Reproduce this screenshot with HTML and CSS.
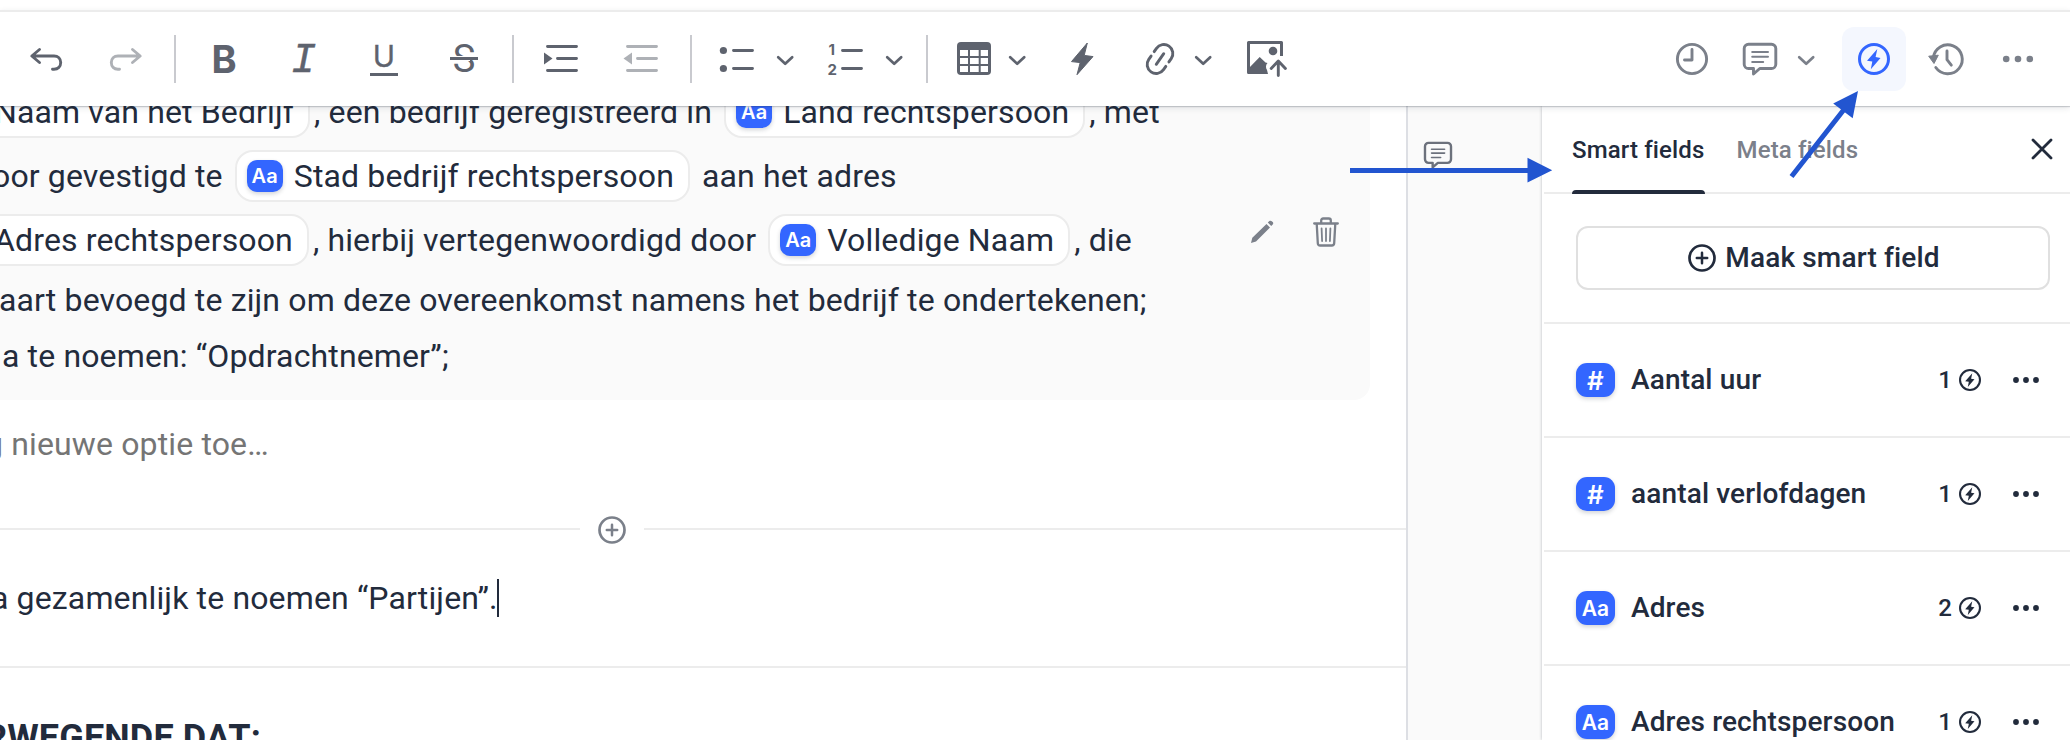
FILE: index.html
```html
<!DOCTYPE html>
<html lang="nl">

<head>
    <meta charset="UTF-8">
    <meta name="viewport" content="width=device-width, initial-scale=1.0">
    <title>Document editor - Smart fields</title>
    <link rel="stylesheet" href="styles.css">
</head>

<body>
    <!-- Shared icons -->
    <svg class="sprite">
        <symbol id="chevron" viewBox="0 0 26 64">
            <path d="M6.2 30.2l7 6.6 7-6.6" fill="none" stroke="currentColor" stroke-width="2.7" stroke-linecap="round" stroke-linejoin="round" />
        </symbol>
        <symbol id="comment" viewBox="0 0 36 34">
            <path d="M6.5 2.3h23a4.3 4.3 0 0 1 4.3 4.3v15.6a4.3 4.3 0 0 1-4.3 4.3H17.8L11.5 32v-5.5h-5a4.3 4.3 0 0 1-4.3-4.3V6.6a4.3 4.3 0 0 1 4.3-4.3z" fill="none" stroke="currentColor" stroke-width="2.9" stroke-linejoin="round" />
            <path d="M10.2 10h15.8M10.2 14.7h15.8M10.2 20h11" stroke="currentColor" stroke-width="2" stroke-linecap="round" />
        </symbol>
        <symbol id="smart" viewBox="0 0 32 32">
            <circle cx="16" cy="16" r="14.5" fill="none" stroke="currentColor" stroke-width="3" />
            <path d="M19.3 6L9 17.8l5.3.8L12.8 26.3 22.5 14.9l-4.9-.9z" fill="currentColor" />
        </symbol>
        <symbol id="plus" viewBox="0 0 28 28">
            <circle cx="14" cy="14" r="12.5" fill="none" stroke="currentColor" stroke-width="2.7" />
            <path d="M14 8.8v10.4M8.8 14h10.4" stroke="currentColor" stroke-width="2.5" stroke-linecap="round" />
        </symbol>
        <symbol id="dots" viewBox="0 0 26 6">
            <circle cx="3" cy="3" r="2.9" fill="currentColor" />
            <circle cx="13" cy="3" r="2.9" fill="currentColor" />
            <circle cx="23" cy="3" r="2.9" fill="currentColor" />
        </symbol>
    </svg>

    <!-- Toolbar -->
    <div class="toolbar">
        <div class="tools">
            <button class="tool">
                <svg viewBox="0 0 64 64"><path class="line" d="M25.5 22.5L17.8 29l7.7 6.5M18 29h22c4 0 6.7 2.7 6.7 6.6S44 42.2 40 42.2h-1.5" /></svg>
            </button>
            <button class="tool disabled">
                <svg viewBox="0 0 64 64"><path class="line" d="M38.5 22.5l7.7 6.5-7.7 6.5M46 29H24c-4 0-6.7 2.7-6.7 6.6s2.7 6.6 6.7 6.6h1.5" /></svg>
            </button>
            <span class="separator"></span>
            <button class="tool bold">B</button>
            <button class="tool italic">I</button>
            <button class="tool underline"><span>U</span></button>
            <button class="tool strike">
                <span>S</span>
                <svg viewBox="0 0 64 64"><path d="M18 29h20v5H18z" fill="#fff" /><path d="M18 31.5h28" stroke="currentColor" stroke-width="3" /></svg>
            </button>
            <span class="separator"></span>
            <button class="tool">
                <svg viewBox="0 0 64 64"><path class="line" d="M17.5 19.5h29M27.5 31.5h19M17.5 43.5h29" /><path d="M14 25.5l8.5 6-8.5 6z" fill="currentColor" /></svg>
            </button>
            <button class="tool disabled">
                <svg viewBox="0 0 64 64"><path class="line" d="M17.5 19.5h29M27.5 31.5h19M17.5 43.5h29" /><path d="M22 25.5l-8.5 6 8.5 6z" fill="currentColor" /></svg>
            </button>
            <span class="separator"></span>
            <button class="tool dropdown">
                <svg viewBox="0 0 64 64">
                    <circle cx="15.4" cy="23.5" r="3.6" fill="currentColor" /><circle cx="15.4" cy="41.5" r="3.6" fill="currentColor" />
                    <path class="line" d="M25.5 23.5h19M25.5 41.5h19" />
                </svg>
                <svg class="chevron"><use href="#chevron" /></svg>
            </button>
            <button class="tool dropdown">
                <svg viewBox="0 0 64 64">
                    <text class="digit" x="11.5" y="28">1</text><text class="digit" x="10.5" y="48">2</text>
                    <path class="line" d="M25.5 23.5h19M25.5 41.5h19" />
                </svg>
                <svg class="chevron"><use href="#chevron" /></svg>
            </button>
            <span class="separator"></span>
            <button class="tool dropdown narrow">
                <svg viewBox="0 0 60 64">
                    <rect x="13" y="15" width="34" height="33" rx="4" fill="currentColor" />
                    <path d="M16 23h8v6h-8zM26 23h8.7v6H26zM36.7 23H44v6h-7.3zM16 31h8v6h-8zM26 31h8.7v6H26zM36.7 31H44v6h-7.3zM16 39h8v6h-8zM26 39h8.7v6H26zM36.7 39H44v6h-7.3z" fill="#fff" />
                </svg>
                <svg class="chevron"><use href="#chevron" /></svg>
            </button>
            <button class="tool">
                <svg viewBox="0 0 64 64"><path d="M37.3 16L21.5 34.6l8.7 1L27 47.7l16-18.1-8.8-1.2z" fill="currentColor" stroke="currentColor" stroke-linejoin="round" /></svg>
            </button>
            <button class="tool dropdown narrow">
                <svg viewBox="0 0 60 64">
                    <path class="line" transform="translate(30 32) rotate(35)" d="M-9-2.7v-4a9 9 0 0 1 18 0v4M-9 2.7v4a9 9 0 0 0 18 0v-4M0-6.500v13" />
                </svg>
                <svg class="chevron"><use href="#chevron" /></svg>
            </button>
            <button class="tool">
                <svg viewBox="0 0 64 64">
                    <path d="M45.5 29V15.5h-33v30H30" fill="none" stroke="currentColor" stroke-width="3" stroke-linejoin="round" />
                    <path d="M12.5 41.5L23.7 30l5.8 5.5 2 .5c-1.8 1.5-2 5-.5 7l1 4H12.5z" fill="currentColor" />
                    <circle cx="37" cy="24" r="4.3" fill="currentColor" />
                    <path class="line" d="M42.3 48.5V34.5M35.2 41.5l7.1-7.5 7.1 7.5" />
                </svg>
            </button>
        </div>

        <div class="tools panel-tools">
            <button class="tool">
                <svg viewBox="0 0 64 64"><circle class="line" cx="32" cy="32" r="14.6" /><path class="line" d="M32 22.5V33h-7.5" /></svg>
            </button>
            <button class="tool dropdown comments">
                <svg class="comment-icon"><use href="#comment" /></svg>
                <svg class="chevron"><use href="#chevron" /></svg>
            </button>
            <button class="tool active">
                <svg class="smart-icon"><use href="#smart" /></svg>
            </button>
            <button class="tool">
                <svg viewBox="0 0 64 64">
                    <path class="line" d="M19.3 31a14.5 14.5 0 1 1 2.5 9.5" />
                    <path d="M14.7 29.2l9.6-1-4.3 8.3z" fill="currentColor" stroke="currentColor" stroke-linejoin="round" />
                    <path class="line" d="M33 24v8.7l4.3 5.5" />
                </svg>
            </button>
            <button class="tool">
                <svg viewBox="0 0 64 64"><circle cx="20.2" cy="32" r="3.3" fill="currentColor" /><circle cx="32" cy="32" r="3.3" fill="currentColor" /><circle cx="43.8" cy="32" r="3.3" fill="currentColor" /></svg>
            </button>
        </div>
    </div>

    <div class="workspace">
        <!-- Document -->
        <div class="document">
            <div class="option">
                <div class="option-text">
                    <div class="row first"><span class="chip">Naam van het Bedrijf</span><span>, een bedrijf geregistreerd in </span><span class="chip"><i class="badge">Aa</i>Land rechtspersoon</span><span>, met</span></div>
                    <div class="row second"><span>oor gevestigd te </span><span class="chip"><i class="badge">Aa</i>Stad bedrijf rechtspersoon</span><span> aan het adres</span></div>
                    <div class="row third"><span class="chip">Adres rechtspersoon</span><span>, hierbij vertegenwoordigd door </span><span class="chip"><i class="badge">Aa</i>Volledige Naam</span><span>, die</span></div>
                    <p class="fourth">aart bevoegd te zijn om deze overeenkomst namens het bedrijf te ondertekenen;</p>
                    <p class="fifth">a te noemen: “Opdrachtnemer”;</p>
                </div>
                <div class="option-actions">
                    <svg width="24" height="24" viewBox="0 0 24 24">
                        <path d="M1 23l1.3-5.3L16.5 3.9 20 7.4 6 21.5zM17.8 2.600l1.6-1.5c.7-.6 1.700-.5 2.400.1l.9.900c.7.700.7 1.700 0 2.400l-1.500 1.500z" fill="currentColor" />
                    </svg>
                    <svg width="26" height="30" viewBox="0 0 26 30">
                        <path d="M1.2 6.5h23.6M8.2 6V3.500c0-1.200.8-2 2-2h5.600c1.200 0 2 .8 2 2V6M3.700 6.500l1.100 19.700c.1 1.500 1 2.300 2.400 2.300h11.600c1.400 0 2.300-.8 2.400-2.300l1.100-19.700" fill="none" stroke="currentColor" stroke-width="2.3" stroke-linecap="round" />
                        <path d="M8.6 11.5l.5 12.5M13 11.5V24M17.4 11.5L16.9 24" stroke="currentColor" stroke-width="1.8" stroke-linecap="round" />
                    </svg>
                </div>
            </div>
            <p class="new-option">g nieuwe optie toe…</p>
            <div class="insert">
                <svg><use href="#plus" /></svg>
            </div>
            <div class="clause"><p>a gezamenlijk te noemen “Partijen”.</p><span class="caret"></span></div>
            <h2>RWEGENDE DAT:</h2>
        </div>

        <!-- Comments gutter -->
        <div class="gutter">
            <svg><use href="#comment" /></svg>
        </div>

        <!-- Smart fields panel -->
        <div class="sidebar">
            <div class="tabs">
                <a class="tab selected">Smart fields</a>
                <a class="tab">Meta fields</a>
                <svg class="close" viewBox="0 0 22 22"><path d="M2 2l18 18M20 2L2 20" stroke="currentColor" stroke-width="2.8" stroke-linecap="round" /></svg>
            </div>
            <div class="create">
                <button class="create-btn"><svg><use href="#plus" /></svg>Maak smart field</button>
            </div>
            <ul class="fields">
                <li><i class="badge hash">#</i><span class="name">Aantal uur</span><span class="count">1</span><svg class="used"><use href="#smart" /></svg><svg class="more"><use href="#dots" /></svg></li>
                <li><i class="badge hash">#</i><span class="name">aantal verlofdagen</span><span class="count">1</span><svg class="used"><use href="#smart" /></svg><svg class="more"><use href="#dots" /></svg></li>
                <li><i class="badge">Aa</i><span class="name">Adres</span><span class="count">2</span><svg class="used"><use href="#smart" /></svg><svg class="more"><use href="#dots" /></svg></li>
                <li><i class="badge">Aa</i><span class="name">Adres rechtspersoon</span><span class="count">1</span><svg class="used"><use href="#smart" /></svg><svg class="more"><use href="#dots" /></svg></li>
            </ul>
        </div>
    </div>

    <!-- Arrows on top of the editor -->
    <svg class="arrows" viewBox="0 0 2070 740">
        <path d="M1350 170.5h180M1791.5 176.5L1844 109.5" stroke="#2255d0" stroke-width="5" />
        <path d="M1527.5 157.8l24.7 12.5-24.7 12.3zM1858 91l-24.8 12.6 19.5 14.6z" fill="#2255d0" />
    </svg>
</body>

</html>
```
FILE: styles.css
```css
* {
    box-sizing: border-box;
    margin: 0;
    padding: 0;
}

body {
    font-family: Roboto, sans-serif;
    letter-spacing: 0.14px;
    color: #222b3c;
    background-color: white;
    width: 2070px;
    height: 740px;
    overflow: hidden;
    display: flex;
    flex-direction: column;
    position: relative;
}

.sprite {
    display: none;
}

/* Toolbar */
.toolbar {
    height: 96px;
    margin-top: 10px;
    flex-shrink: 0;
    display: flex;
    justify-content: space-between;
    align-items: center;
    padding: 0 20px 0 14px;
    border-top: 2px solid #ececec;
    background-color: white;
    box-shadow: 0 1px 1px rgba(34, 43, 60, 0.2), 0 2px 6px rgba(34, 43, 60, 0.12);
    z-index: 2;
}

.tools {
    display: flex;
    align-items: center;
    gap: 16px;
    color: #5e636e;
}

.panel-tools {
    gap: 8px;
    color: #7b808a;
}

.tool {
    width: 64px;
    height: 64px;
    display: flex;
    align-items: center;
    justify-content: center;
    background: none;
    border: none;
    border-radius: 12px;
    color: inherit;
    flex-shrink: 0;
}

.tool svg {
    width: 64px;
    height: 64px;
    flex-shrink: 0;
}

.tool.disabled {
    color: #aeb1b6;
}

.tool.active {
    color: #3366ff;
    background-color: #f4f7fe;
}

.tool .line {
    fill: none;
    stroke: currentColor;
    stroke-width: 2.9;
    stroke-linecap: round;
    stroke-linejoin: round;
}

.tool.dropdown {
    width: 93px;
    justify-content: flex-start;
}

.tool.dropdown.narrow {
    width: 90px;
}

.tool.narrow svg {
    width: 60px;
}

.tool.dropdown.comments {
    width: 102px;
    padding-left: 10px;
}

.tool svg.chevron {
    width: 26px;
}

.tool svg.comment-icon {
    width: 36px;
    height: 34px;
    margin-right: 15px;
}

.tool svg.smart-icon {
    width: 32px;
    height: 32px;
}

.separator {
    width: 2px;
    height: 48px;
    background-color: #c9cacf;
}

.bold {
    font: 700 38px Inter, sans-serif;
}

.italic {
    font: italic 42px "Liberation Mono", monospace;
    padding: 4px 1px 0 0;
    -webkit-text-stroke: 0.4px #5e636e;
}

.underline {
    font: 400 30px Inter, sans-serif;
    -webkit-text-stroke: 0.3px #5e636e;
}

.underline span {
    width: 28px;
    height: 33px;
    line-height: 26px;
    border-bottom: 3px solid #5e636e;
}

.strike {
    font: 400 38px Roboto, sans-serif;
}

.strike span {
    width: 0;
    display: flex;
    justify-content: center;
}

.strike svg {
    margin: 0 -32px;
}

.digit {
    font: 700 15px Inter, sans-serif;
    fill: currentColor;
}

/* Workspace */
.workspace {
    flex: 1;
    min-height: 0;
    display: flex;
}

/* Document */
.document {
    width: 1408px;
    overflow: hidden;
    border-right: 2px solid #dddfe4;
    font-size: 32px;
}

.document p,
.document .row span {
    white-space: pre;
}

.option {
    width: 1370px;
    height: 320px;
    margin-top: -26px;
    display: flex;
    justify-content: space-between;
    background-color: #fafafa;
    border-radius: 0 0 16px 0;
}

.row {
    height: 64px;
    display: flex;
    align-items: center;
}

.option p {
    line-height: 56px;
}

.chip {
    height: 52px;
    display: flex;
    align-items: center;
    margin: 0 4px;
    padding: 0 14px 0 10px;
    background-color: white;
    border: 2px solid #ececec;
    border-radius: 18px;
}

.badge {
    width: 36px;
    height: 32px;
    display: flex;
    align-items: center;
    justify-content: center;
    margin-right: 11px;
    border-radius: 10px;
    background-color: #3366ff;
    box-shadow: 0 2px 4px rgba(34, 43, 60, 0.2);
    color: white;
    font: 600 20px Inter, sans-serif;
}

.first {
    margin-left: -22px;
}

.second {
    margin-left: -8px;
}

.third {
    margin-left: -22px;
}

.fourth {
    margin-left: -1px;
}

.fifth {
    margin-left: 2px;
}

.option-actions {
    display: flex;
    gap: 39px;
    padding: 137px 31px 0 0;
    color: #7b808a;
}

.option-actions svg:first-child {
    margin-top: 3px;
}

.new-option {
    height: 128px;
    padding-top: 16px;
    margin-left: -15px;
    line-height: 56px;
    color: #757575;
}

.insert {
    height: 2px;
    display: flex;
    align-items: center;
}

.insert::before,
.insert::after {
    content: "";
    width: 580px;
    height: 2px;
    background-color: #ececec;
}

.insert::after {
    flex: 1;
}

.insert svg {
    width: 28px;
    height: 28px;
    margin: 2px 18px 0;
    color: #7b808a;
}

.clause {
    height: 138px;
    padding-top: 40px;
    display: flex;
    border-bottom: 2px solid #ececec;
}

.clause p {
    line-height: 56px;
    margin-left: -9px;
}

.caret {
    width: 2px;
    height: 38px;
    margin: 9px 0 0 -1px;
    background-color: #222b3c;
}

h2 {
    margin-left: -16px;
    padding-top: 42px;
    font-size: 36px;
    line-height: 56px;
    height: 72px;
}

/* Gutter */
.gutter {
    width: 134px;
    padding: 35px 15px;
    background-color: #fafafa;
}

.gutter svg {
    width: 30px;
    height: 28px;
    color: #6c717c;
}

/* Sidebar */
.sidebar {
    width: 528px;
    padding-left: 2px;
    background-color: white;
    box-shadow: 0 0 3px rgba(34, 43, 60, 0.3);
}

.tabs {
    height: 88px;
    display: flex;
    align-items: center;
    gap: 32px;
    padding: 0 17px 0 28px;
    border-bottom: 2px solid #ececec;
    letter-spacing: 0.14px;
}

.tab {
    height: 88px;
    margin-bottom: -2px;
    line-height: 88px;
    font-size: 24px;
    font-weight: 500;
    color: #7b808a;
}

.tab.selected {
    display: flex;
    flex-direction: column;
    color: #222b3c;
}

.tab.selected::after {
    content: "";
    height: 4px;
    margin-top: -4px;
    flex-shrink: 0;
    border-radius: 4px 4px 0 0;
    background-color: #222b3c;
}

.close {
    width: 22px;
    height: 22px;
    margin-left: auto;
}

.create {
    height: 130px;
    padding: 32px 20px 0 32px;
    border-bottom: 2px solid #ececec;
}

.create-btn {
    width: 100%;
    height: 64px;
    display: flex;
    align-items: center;
    justify-content: center;
    gap: 9px;
    background: white;
    border: 2px solid #e0e0e0;
    border-radius: 12px;
    color: #222b3c;
    font: 500 28px Roboto, sans-serif;
    letter-spacing: 0.16px;
    padding: 0 0 1px 2px;
}

.create-btn svg {
    width: 28px;
    height: 28px;
}

.fields {
    list-style: none;
}

.fields li {
    height: 114px;
    display: flex;
    align-items: center;
    padding: 0 31px 0 32px;
    border-bottom: 2px solid #ececec;
    font-size: 28px;
    font-weight: 500;
}

.fields li:last-child {
    height: 74px;
    padding-top: 39px;
    align-items: flex-start;
    border-bottom: none;
}

.fields .badge {
    width: 39px;
    height: 34px;
    margin-right: 16px;
    border-radius: 11px;
    font-size: 21px;
}

.fields .hash {
    font-size: 26px;
}

.name {
    flex: 1;
    line-height: 34px;
}

.count {
    font-size: 24px;
    line-height: 34px;
    margin-right: 7px;
}

.used {
    width: 22px;
    height: 34px;
}

.more {
    width: 26px;
    height: 34px;
    margin-left: 32px;
}

.arrows {
    position: absolute;
    top: 0;
    left: 0;
    width: 2070px;
    height: 740px;
    z-index: 3;
    pointer-events: none;
}
```
